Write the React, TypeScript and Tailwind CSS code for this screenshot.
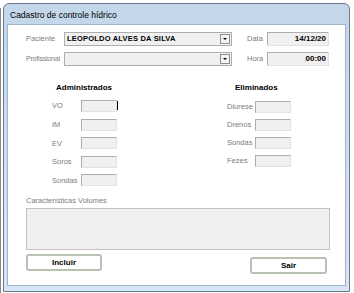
const font = { fontFamily: '"Liberation Sans", Arial, sans-serif' }

function Box({ className = "", children }: { className?: string; children?: React.ReactNode }) {
  return (
    <div
      className={
        "h-[12px] bg-[#f0f0f0] border border-[#adadad] border-r-[#e3e3e3] border-b-[#e3e3e3] text-[8px] leading-[11px] text-black " +
        className
      }
    >
      {children}
    </div>
  )
}

function Combo({ value }: { value?: string }) {
  return (
    <div className="w-[168px] h-[14px] bg-[#f0f0f0] border border-[#adadad] flex items-center justify-between">
      <span className="pl-[2px] text-[7.5px] font-bold text-black tracking-[0.2px]">{value}</span>
      <div className="w-[10px] h-[10px] mr-[1px] border border-[#8d8d8d] bg-[#f4f4f4] flex flex-col items-center justify-center gap-[1px]">
        <div className="w-0 h-0 border-l-[2px] border-r-[2px] border-t-[2px] border-l-transparent border-r-transparent border-t-black" />
      </div>
    </div>
  )
}

function FieldRow({ label, labelW, boxW }: { label: string; labelW: string; boxW: string }) {
  return (
    <div className="flex items-center h-[12px]">
      <span className={"text-[7.5px] text-[#7d7d7d] " + labelW}>{label}</span>
      <Box className={boxW} />
    </div>
  )
}

export default function App() {
  return (
    <div className="w-[354px] h-[293px] bg-white relative overflow-hidden" style={font}>
      <div className="absolute left-0 top-[8px] w-[1px] h-[285px] bg-[#8a8a8a]" />
      <div className="ml-[3px] mt-[3px] w-[347px] h-[289px] rounded-t-[6px] border border-[#6c7a8c] bg-gradient-to-b from-[#c3d6ea] to-[#d7e6f5] flex flex-col">
        {/* Title */}
        <div className="h-[20px] flex items-center pl-[6px] pt-[2px] text-[8.5px] text-black">
          Cadastro de controle hídrico
        </div>
        {/* Client */}
        <div className="mx-[3px] h-[262px] bg-white border border-[#9db3cc] flex flex-col pl-[18px]">
          <div className="mt-[7px] flex items-center">
            <span className="w-[38px] text-[7.5px] text-[#7d7d7d]">Paciente</span>
            <Combo value="LEOPOLDO ALVES DA SILVA" />
            <span className="ml-[15px] w-[20px] text-[7.5px] text-[#7d7d7d]">Data</span>
            <Box className="w-[62px] h-[14px] text-right pr-[2px] font-bold leading-[12px]">14/12/20</Box>
          </div>
          <div className="mt-[6px] flex items-center">
            <span className="w-[38px] text-[7px] text-[#7d7d7d] whitespace-nowrap tracking-[-0.2px]">Profissional</span>
            <Combo />
            <span className="ml-[15px] w-[20px] text-[7.5px] text-[#7d7d7d]">Hora</span>
            <Box className="w-[62px] h-[14px] text-right pr-[2px] font-bold leading-[12px]">00:00</Box>
          </div>

          <div className="mt-[17px] flex">
            <div className="w-[180px] flex flex-col">
              <div className="pl-[30px] text-[8px] font-bold text-black h-[10px] leading-[10px]">Administrados</div>
              <div className="mt-[7px] pl-[26px] flex flex-col gap-[6.6px]">
                <div className="flex items-center h-[12px]">
                  <span className="text-[7.5px] text-[#7d7d7d] w-[29px]">VO</span>
                  <Box className="w-[36px] relative">
                    <div className="absolute right-[-2px] top-[0px] w-[1px] h-[9px] bg-black" />
                  </Box>
                </div>
                <FieldRow label="IM" labelW="w-[29px]" boxW="w-[36px]" />
                <FieldRow label="EV" labelW="w-[29px]" boxW="w-[36px]" />
                <FieldRow label="Soros" labelW="w-[29px]" boxW="w-[36px]" />
                <FieldRow label="Sondas" labelW="w-[29px]" boxW="w-[36px]" />
              </div>
            </div>
            <div className="flex flex-col">
              <div className="pl-[29px] text-[8px] font-bold text-black h-[10px] leading-[10px]">Eliminados</div>
              <div className="mt-[8px] pl-[21px] flex flex-col gap-[6px]">
                <FieldRow label="Diurese" labelW="w-[28px]" boxW="w-[36px]" />
                <FieldRow label="Drenos" labelW="w-[28px]" boxW="w-[36px]" />
                <FieldRow label="Sondas" labelW="w-[28px]" boxW="w-[36px]" />
                <FieldRow label="Fezes" labelW="w-[28px]" boxW="w-[36px]" />
              </div>
            </div>
          </div>

          <div className="mt-[10px] text-[7.5px] text-[#7d7d7d] h-[10px] leading-[10px]">Características Volumes</div>
          <div className="mt-[2px] w-[304px] h-[42px] bg-[#f0f0f0] border border-[#c2c2c2]" />

          <div className="mt-[4px] flex items-start w-[304px] justify-between">
            <button className="w-[76px] h-[17px] rounded-[3px] border-2 border-[#b8c2b2] bg-white text-[8px] font-bold text-black">
              Incluir
            </button>
            <button className="mt-[3px] mr-[3px] w-[77px] h-[17px] rounded-[3px] border-2 border-[#b8c2b2] bg-white text-[8px] font-bold text-black">
              Sair
            </button>
          </div>
        </div>
      </div>
    </div>
  )
}
